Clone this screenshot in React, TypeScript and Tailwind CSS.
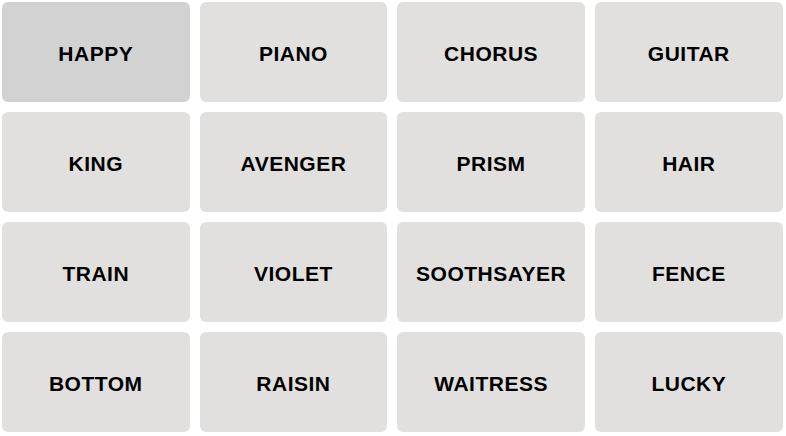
const words = [
  'HAPPY', 'PIANO', 'CHORUS', 'GUITAR',
  'KING', 'AVENGER', 'PRISM', 'HAIR',
  'TRAIN', 'VIOLET', 'SOOTHSAYER', 'FENCE',
  'BOTTOM', 'RAISIN', 'WAITRESS', 'LUCKY',
];

const selected = new Set(['HAPPY']);

export default function App() {
  return (
    <div className="w-[786px] h-[436px] bg-white pt-[2px] pl-[2px]" style={{ fontFamily: '"Liberation Sans", Arial, sans-serif' }}>
      <div className="grid grid-cols-[repeat(4,187.5px)] auto-rows-[99.5px] gap-x-[10.2px] gap-y-[10.5px]">
        {words.map(w => (
          <button
            key={w}
            className={`flex items-center justify-center rounded-[6px] text-[21px] font-bold text-black tracking-[0.5px] ${
              selected.has(w) ? 'bg-[#d2d2d2]' : 'bg-[#e1e0de]'
            }`}
          >
            <span className="mt-[3px]">{w}</span>
          </button>
        ))}
      </div>
    </div>
  );
}
